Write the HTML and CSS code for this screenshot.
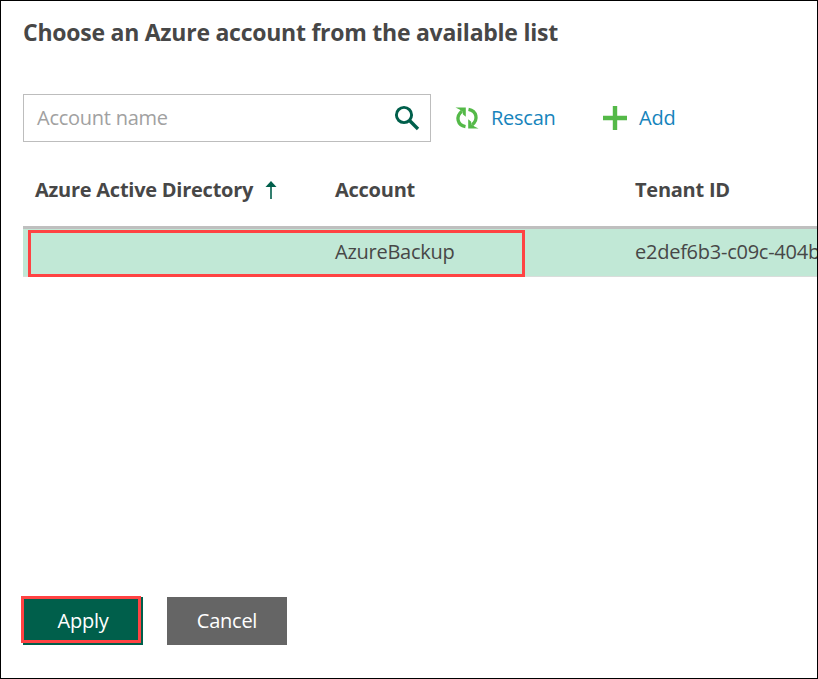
FILE: index.html
```html
<!DOCTYPE html>
<html lang="en">
<head>
<meta charset="utf-8">
<title>Choose an Azure account</title>
<link rel="stylesheet" href="styles.css">
</head>
<body>
<main class="dialog">
  <h1 class="title">Choose an Azure account from the available list</h1>
  <div class="toolbar">
    <div class="search">
      <span class="placeholder">Account name</span>
      <svg class="search-icon" width="26" height="26" viewBox="0 0 26 26" fill="none" stroke="#005f4b"><circle cx="10" cy="10" r="7.6" stroke-width="2.9"/><path d="M15.3 15.3L24 24" stroke-width="3.4"/></svg>
    </div>
    <a class="action rescan"><svg width="24" height="24" viewBox="0 0 24 24"><path d="M6.800 5.200C.5 10.500 2.200 19 10.500 20.600M17.200 18.800C23.500 13.500 21.800 5 13.500 3.400" fill="none" stroke="#54b948" stroke-width="3.300"/><path d="M.5 1.500H10.800V10.800L7.800 8.300V6L4.500 3.500ZM23.500 22.500H13.200V13.200L16.200 15.700V18L19.500 20.500Z" fill="#54b948"/></svg><span>Rescan</span></a>
    <a class="action add"><svg width="24" height="24" viewBox="0 0 24 24"><path d="M12 0V24M0 12H24" stroke="#54b948" stroke-width="4.4"/></svg><span>Add</span></a>
  </div>
  <div class="table">
    <div class="row head">
      <div class="cell"><span>Azure Active Directory</span><svg class="sort" width="12" height="18" viewBox="0 0 12 18"><path d="M6 0L11.5 6H.5Z" fill="#005f4b"/><path d="M6 4V18" stroke="#005f4b" stroke-width="1.6"/></svg></div>
      <div class="cell"><span>Account</span></div>
      <div class="cell"><span>Tenant ID</span></div>
    </div>
    <div class="row selected">
      <div class="cell"></div>
      <div class="cell"><span>AzureBackup</span></div>
      <div class="cell"><span>e2def6b3-c09c-404b</span></div>
      <div class="mark mark-row"></div>
    </div>
  </div>
  <div class="buttons">
    <button class="button apply"><span class="label">Apply</span><span class="mark mark-apply"></span></button>
    <button class="button cancel"><span class="label">Cancel</span></button>
  </div>
</main>
</body>
</html>
```
FILE: styles.css
```css
* { box-sizing: border-box; }
body { margin: 0; background: #fff; }
.dialog {
  width: 818px;
  height: 679px;
  border: 1px solid #000;
  padding: 15px 0 33px 22px;
  display: flex;
  flex-direction: column;
  overflow: hidden;
  font-family: "Open Sans", "Noto Sans", sans-serif;
  font-size: 20px;
  letter-spacing: -.25px;
  color: #474747;
  white-space: nowrap;
}
.title { margin: 0; font-size: 23px; line-height: 32px; font-weight: 700; letter-spacing: -.25px; }
.toolbar { display: flex; align-items: center; margin-top: 46px; height: 48px; }
.search {
  width: 408px;
  height: 48px;
  border: 1px solid #bdbdbd;
  padding: 0 10px 0 13px;
  display: flex;
  align-items: center;
  justify-content: space-between;
}
.placeholder { color: #a1a1a1; }
.placeholder, .action span, .cell span, .label { padding-bottom: 2px; }
.label { display: inline-block; }
.action { display: flex; align-items: center; gap: 12px; color: #1684bc; }
.rescan { width: 148px; margin-left: 24px; }
.table { margin-top: 12px; }
.row { display: grid; grid-template-columns: 300px 300px 195px; position: relative; }
.cell { padding-left: 12px; display: flex; align-items: center; overflow: hidden; }
.head { height: 75px; border-bottom: 3px solid #bfbfbf; font-weight: 700; }
.sort { margin-left: 12px; }
.selected { height: 48px; background: #c1e8d6; border-bottom: 1px solid #d9dddb; }
.mark { position: absolute; border: 3px solid #ff4343; }
.mark-row { left: 5px; top: 1px; width: 497px; height: 47px; }
.buttons { display: flex; gap: 24px; margin-top: auto; }
.button {
  position: relative;
  width: 120px;
  height: 48px;
  border: 0;
  padding: 0;
  color: #fff;
  font: inherit;
  letter-spacing: inherit;
}
.apply { background: #005f4b; }
.cancel { background: #656565; }
.mark-apply { left: -2px; top: -1px; width: 120px; height: 47px; }
```
